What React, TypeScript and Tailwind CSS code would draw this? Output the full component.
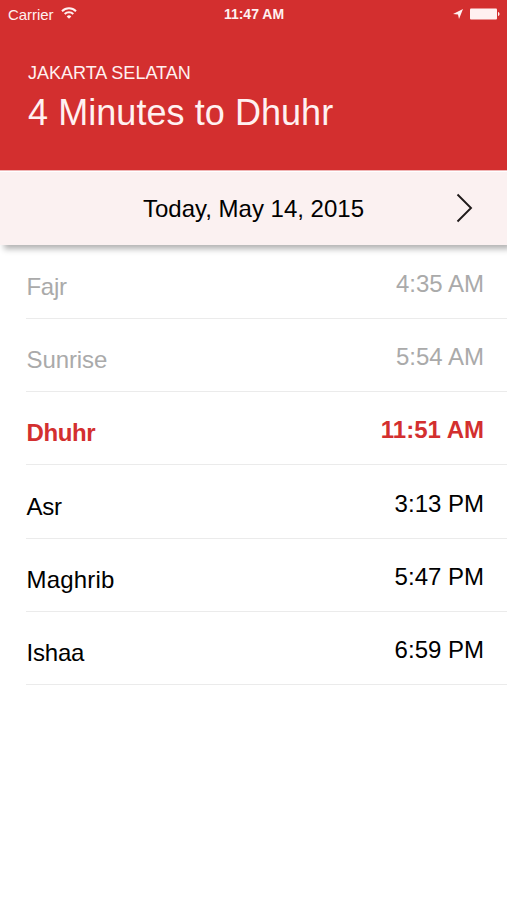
import React from "react";

type Prayer = {
  name: string;
  time: string;
  tone: string;
  spacing: string;
};

const prayers: Prayer[] = [
  { name: "Fajr", time: "4:35 AM", tone: "text-[#aaaaaa]", spacing: "tracking-[-0.3px]" },
  { name: "Sunrise", time: "5:54 AM", tone: "text-[#aaaaaa]", spacing: "tracking-[-0.1px]" },
  { name: "Dhuhr", time: "11:51 AM", tone: "text-[#d32f2f] font-bold", spacing: "tracking-[-0.4px]" },
  { name: "Asr", time: "3:13 PM", tone: "text-black", spacing: "tracking-[-0.2px]" },
  { name: "Maghrib", time: "5:47 PM", tone: "text-black", spacing: "tracking-[0.2px]" },
  { name: "Ishaa", time: "6:59 PM", tone: "text-black", spacing: "tracking-[-0.2px]" },
];

const StatusBar = () => (
  <div className="grid h-7 grid-cols-3 items-center pl-2 pr-[7px] leading-none">
    <div className="flex items-center gap-[7px]">
      <span className="text-[15px] tracking-[-0.05px]">Carrier</span>
      <svg className="-mt-[2px]" width="16" height="12" viewBox="0 0 16 12" fill="none" stroke="currentColor" strokeWidth="2">
        <path d="M1 4.2a10 10 0 0 1 14 0" />
        <path d="M3.7 7a6.1 6.1 0 0 1 8.6 0" />
        <path d="M8 11.8 5.7 9.4a3.3 3.3 0 0 1 4.6 0Z" fill="currentColor" stroke="none" />
      </svg>
    </div>
    <span className="text-center text-[14px] font-bold">11:47 AM</span>
    <div className="-mt-px flex items-center justify-end gap-[7px]">
      <svg width="10" height="10" viewBox="0 0 10 10" fill="currentColor">
        <path d="M10 0 6 10 5 5.4 0 5Z" />
      </svg>
      <svg width="30" height="12" viewBox="0 0 30 12" fill="currentColor">
        <rect x="0" y="0.5" width="27" height="11" rx="1" />
        <path d="M28 4v4c2-.6 2-3.4 0-4Z" />
      </svg>
    </div>
  </div>
);

const App = () => {
  return (
    <div className="flex min-h-screen w-full flex-col bg-white font-['Liberation_Sans',Arial,sans-serif]">
      {/* Header */}
      <header className="relative z-10 h-[170px] bg-[#d32f2f] text-[#fff1f1]">
        <StatusBar />
        <div className="px-7 pt-[34px]">
          <p className="text-[18px] leading-[22px]">JAKARTA SELATAN</p>
          <h1 className="mt-2 text-[36px] leading-[42px] tracking-[0.06px]">4 Minutes to Dhuhr</h1>
        </div>
      </header>

      {/* Date picker */}
      <div className="grid h-[75px] grid-cols-[1fr_auto_1fr] items-center border-t border-[#f0b4b4] bg-[#fbf1f1] pr-[34px] text-black shadow-[inset_0_1px_0_#fff,4px_4px_6px_rgba(0,0,0,0.3)]">
        <span className="col-start-2 pl-[34px] pt-px text-[24px]">Today, May 14, 2015</span>
        <svg className="justify-self-end" width="17" height="30" viewBox="0 0 17 30" fill="none" stroke="#1f1a1a" strokeWidth="1.9">
          <path d="m1.5 1.5 13.5 13.5L1.5 28.5" />
        </svg>
      </div>

      {/* Prayer times */}
      <ul className="pl-[26px] pt-[0.6px]">
        {prayers.map((prayer) => (
          <li
            key={prayer.name}
            className={`flex h-[73.3px] items-center justify-between border-b border-[#ebebeb] pr-[23px] text-[24px] ${prayer.tone}`}
          >
            <span className={`pl-[0.5px] pt-[10px] ${prayer.spacing}`}>{prayer.name}</span>
            <span className="pt-[4px]">{prayer.time}</span>
          </li>
        ))}
      </ul>
    </div>
  );
};

export default App;
